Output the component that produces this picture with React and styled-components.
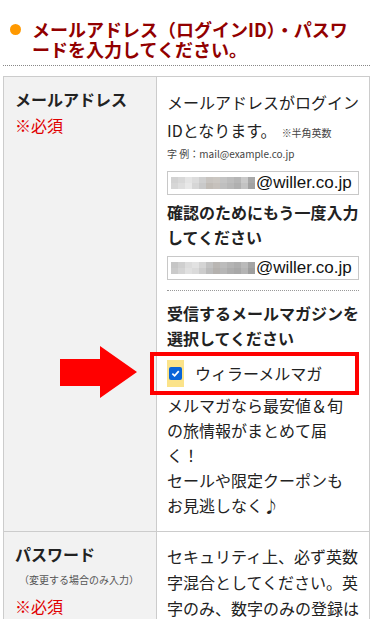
import React from 'react'
import styled, { createGlobalStyle } from 'styled-components'

const GlobalStyle = createGlobalStyle`
  html, body {
    margin: 0;
    padding: 0;
    background: #fff;
  }
  body {
    font-family: 'Noto Sans CJK JP', 'Noto Sans', sans-serif;
    color: #333;
  }
`

const Page = styled.div`
  width: 376px;
  padding: 19px 6px 0 3px;
  box-sizing: border-box;
`

const Title = styled.h2`
  margin: 0;
  padding: 0 6px 0 29px;
  position: relative;
  font-size: 18px;
  line-height: 20px;
  font-weight: 700;
  color: #920000;
  &::before {
    content: '';
    position: absolute;
    left: 7px;
    top: 5px;
    width: 11px;
    height: 11px;
    border-radius: 50%;
    background: #ff9900;
  }
`

const TitleRule = styled.div`
  margin-top: 6px;
  border-top: 1px dotted #888;
`

const Table = styled.div`
  margin-top: 10px;
  border: 1px solid #ccc;
  border-bottom: none;
  display: grid;
  grid-template-columns: 153px 1fr;
`

const Head = styled.div`
  background: #f2f2f2;
  border-right: 1px solid #ccc;
  border-bottom: 1px solid #ccc;
  padding: 9px 8px 12px 11px;
`

const HeadTitle = styled.div`
  font-size: 16px;
  line-height: 26px;
  font-weight: 700;
  color: #222;
`

const HeadNote = styled.div`
  font-size: 10px;
  line-height: 26px;
  padding-left: 4px;
  color: #555;
`

const Required = styled.div`
  font-size: 16px;
  line-height: 26px;
  color: #e00000;
`

const Cell = styled.div`
  border-bottom: 1px solid #ccc;
  padding: ${p => p.$pt || 11}px 8px 13px 10px;
  font-size: 16px;
  line-height: 25px;
  color: #222;
`

const Text = styled.p`
  margin: ${p => p.$mt || 0}px ${p => p.$mr || 0}px 0 0;
  line-height: ${p => p.$lh || 25}px;
`

const Small = styled.span`
  font-size: 10px;
  line-height: 10px;
  margin-left: 5px;
  color: #444;
`

const SmallNote = styled.div`
  font-size: 10px;
  line-height: 20px;
  color: #444;
`

const Field = styled.div`
  display: flex;
  align-items: center;
  height: 22px;
  margin: ${p => p.$mt || 8}px 3px 0 0;
  border: 1px solid #c8c8c8;
  padding: 0 6px 0 3px;
  overflow: hidden;
`

const Mosaic = styled.div`
  display: grid;
  grid-template-columns: repeat(12, 7px);
  grid-template-rows: repeat(2, 6px);
  margin-right: 1px;
`

const Tile = styled.span`
  background: ${p => p.$c};
`

const Domain = styled.span`
  font-family: 'Liberation Sans', Arial, sans-serif;
  font-size: 17px;
  line-height: 22px;
  color: #111;
`

const Bold = styled.p`
  margin: ${p => p.$mt || 0}px 0 0;
  font-weight: 700;
  line-height: 25px;
`

const Divider = styled.div`
  margin: 10px 3px 0 0;
  border-top: 1px dotted #999;
`

const CheckRow = styled.label`
  position: relative;
  display: flex;
  align-items: center;
  gap: 11px;
  margin: 1px 3px 0 -17px;
  height: 35px;
  border: 4px solid #ff0000;
  padding-left: 13px;
`

const CheckBg = styled.span`
  display: flex;
  align-items: center;
  justify-content: center;
  width: 17px;
  height: 27px;
  background: #fbe38a;
`

const Box = styled.span`
  display: flex;
  align-items: center;
  justify-content: center;
  width: 13px;
  height: 13px;
  border-radius: 2px;
  background: #0a64d8;
`

const CheckLabel = styled.span`
  font-size: 16px;
  color: #222;
`

const Arrow = styled.svg`
  position: absolute;
  left: -94px;
  top: -10px;
  width: 78px;
  height: 53px;
`

const mosaicA = [
  '#d2d2d2', '#d8d8d8', '#e4e4e4', '#dcdcdc', '#cfcfcf', '#c8c4c0', '#cbc7c2', '#c4c4c4', '#bdbdbd', '#b6b6b6', '#c9c9c9', '#a8a8a8',
  '#d6d6d6', '#dedede', '#e8e8e8', '#d6d6d6', '#c9c9c9', '#c1bcb6', '#c6c1bc', '#bfbfbf', '#b8b8b8', '#b0b0b0', '#c2c2c2', '#a2a2a2',
]
const mosaicB = [
  '#c6c6c6', '#cfcfcf', '#dcdcdc', '#e2e2e2', '#d4d4d4', '#c2c2c2', '#b9b6b3', '#bcbcbc', '#b4b4b4', '#aeaeae', '#bababa', '#a4a4a4',
  '#cacaca', '#d4d4d4', '#e0e0e0', '#dadada', '#cccccc', '#bbbbbb', '#b4b1ae', '#b6b6b6', '#adadad', '#a8a8a8', '#b4b4b4', '#9e9e9e',
]

const MaskedEmail = ({ tiles, mt }) => (
  <Field $mt={mt}>
    <Mosaic>
      {tiles.map((c, i) => (
        <Tile key={i} $c={c} />
      ))}
    </Mosaic>
    <Domain>@willer.co.jp</Domain>
  </Field>
)

const App = () => {
  return (
    <Page>
      <GlobalStyle />
      <Title>メールアドレス（ログインID）・パスワードを入力してください。</Title>
      <TitleRule />
      <Table>
        <Head>
          <HeadTitle>メールアドレス</HeadTitle>
          <Required>※必須</Required>
        </Head>
        <Cell>
          <Text $lh={28}>
            メールアドレスがログインIDとなります。<Small>※半角英数</Small>
          </Text>
          <SmallNote>字 例：mail@example.co.jp</SmallNote>
          <MaskedEmail tiles={mosaicA} mt={7} />
          <Bold $mt={5}>確認のためにもう一度入力してください</Bold>
          <MaskedEmail tiles={mosaicB} mt={6} />
          <Divider />
          <Bold $mt={10}>受信するメールマガジンを選択してください</Bold>
          <CheckRow>
            <Arrow viewBox="0 0 78 53" aria-hidden="true">
              <polygon points="0,13 40,13 40,0 77,26 40,52 40,40 0,40" fill="#ff0000" />
            </Arrow>
            <CheckBg>
              <Box>
                <svg width="9" height="9" viewBox="0 0 10 10">
                  <path d="M1.5 5.2 L4 7.6 L8.6 2.4" stroke="#fff" strokeWidth="1.9" fill="none" />
                </svg>
              </Box>
            </CheckBg>
            <CheckLabel>ウィラーメルマガ</CheckLabel>
          </CheckRow>
          <Text $mt={-2} $mr={6}>
            メルマガなら最安値＆旬の旅情報がまとめて届く！
            <br />
            セールや限定クーポンもお見逃しなく♪
          </Text>
        </Cell>
        <Head>
          <HeadTitle>パスワード</HeadTitle>
          <HeadNote>（変更する場合のみ入力）</HeadNote>
          <Required>※必須</Required>
        </Head>
        <Cell $pt={11}>
          <Text $lh={26}>
            セキュリティ上、必ず英数字混合としてください。英字のみ、数字のみの登録はできません。
          </Text>
        </Cell>
      </Table>
    </Page>
  )
}

export default App
